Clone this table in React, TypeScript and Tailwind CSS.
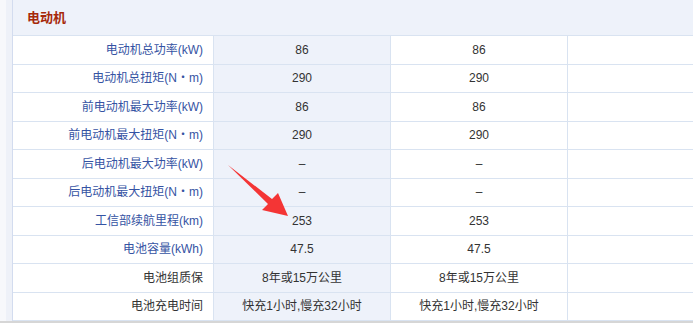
import React from 'react';

type SpecRow = { label: string; values: string[]; link?: boolean };

const rows: SpecRow[] = [
    { label: '电动机总功率(kW)', values: ['86', '86'], link: true },
    { label: '电动机总扭矩(N・m)', values: ['290', '290'], link: true },
    { label: '前电动机最大功率(kW)', values: ['86', '86'], link: true },
    { label: '前电动机最大扭矩(N・m)', values: ['290', '290'], link: true },
    { label: '后电动机最大功率(kW)', values: ['–', '–'], link: true },
    { label: '后电动机最大扭矩(N・m)', values: ['–', '–'], link: true },
    { label: '工信部续航里程(km)', values: ['253', '253'], link: true },
    { label: '电池容量(kWh)', values: ['47.5', '47.5'], link: true },
    { label: '电池组质保', values: ['8年或15万公里', '8年或15万公里'] },
    { label: '电池充电时间', values: ['快充1小时,慢充32小时', '快充1小时,慢充32小时'] },
];

const Row = ({ label, values, link }: SpecRow) => (
    <div className="flex h-[29px] border-b border-[#d9e3f1]">
        <div
            className={`w-[201px] shrink-0 border-r border-[#d9e3f1] flex items-center justify-end pr-[10px] ${
                link ? 'text-[#3553a3]' : 'text-[#333]'
            }`}
        >
            {label}
        </div>
        <div className="w-[177px] shrink-0 border-r border-[#d9e3f1] bg-[#eef2fa] flex items-center justify-center text-[#333]">
            {values[0]}
        </div>
        <div className="w-[177px] shrink-0 border-r border-[#d9e3f1] flex items-center justify-center text-[#333]">
            {values[1]}
        </div>
        <div className="flex-1" />
    </div>
);

export default function App() {
    return (
        <div className="w-[693px] h-[323px] bg-white text-[12px] font-['Liberation_Sans','Noto_Sans_CJK_SC',sans-serif] flex flex-col overflow-hidden">
            <div className="relative flex flex-1 overflow-hidden">
                <div className="w-[6px] shrink-0 bg-[#f7f8fb]" />
                <div className="w-[6px] shrink-0 bg-[#eef1f8]" />
                <div className="flex-1 border-l border-[#d3dcef] flex flex-col">
                    <div className="h-[36px] shrink-0 bg-[#eef2fa] border-b border-[#d9e3f1] flex items-center pl-[14px]">
                        <span className="font-bold text-[13px] text-[#a6290a]">电动机</span>
                    </div>
                    {rows.map((r) => (
                        <Row key={r.label} {...r} />
                    ))}
                </div>

                {/* red pointer arrow */}
                <svg className="absolute left-0 top-0 pointer-events-none" width="693" height="321">
                    <polygon
                        points="228,165 268,204 262,210 288,216 278,193 272,199"
                        fill="#f43535"
                    />
                </svg>
            </div>
            <div className="h-[2px] shrink-0 bg-[#d6d6d6]" />
        </div>
    );
}
